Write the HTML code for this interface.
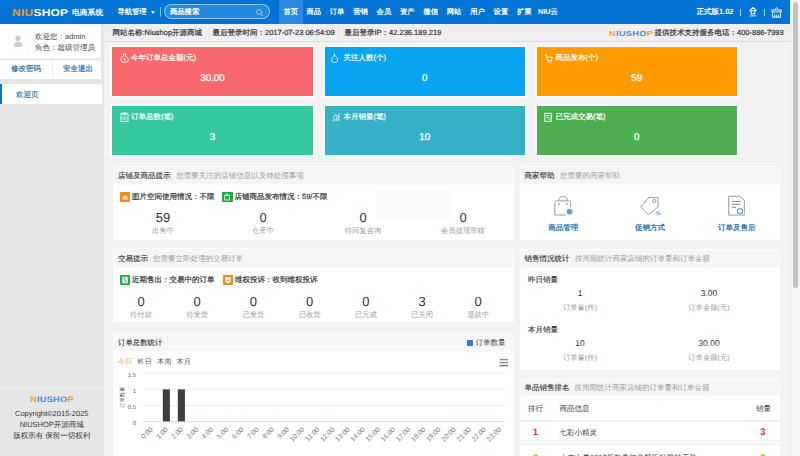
<!DOCTYPE html>
<html><head><meta charset="utf-8">
<style>
*{margin:0;padding:0;box-sizing:border-box;}
html,body{width:800px;height:456px;overflow:hidden;background:#f2f2f2;font-family:"Liberation Sans",sans-serif;color:#333;text-rendering:geometricPrecision;}
.a{position:absolute;white-space:nowrap;}
#hd{left:0;top:0;width:790px;height:24px;background:#0373d6;}
#sb{left:790px;top:0;width:10px;height:456px;background:#f6f6f6;border-left:1px solid #e9e9e9;}
#th{left:793px;top:2px;width:5px;height:286px;background:#c3c3c3;border-radius:3px;}
.nav{top:0;height:24px;line-height:24px;font-size:7.3px;color:#fff;font-weight:bold;text-align:center;}
#side{left:0;top:24px;width:103.5px;height:432px;background:#e6e6e6;}
#info{left:103.5px;top:24px;width:686.5px;height:18px;background:#efefef;border-bottom:1px solid #dedede;}
.it{font-size:7.5px;color:#333;top:28.5px;line-height:8px;-webkit-text-stroke:0.2px #333;}
.sep{top:25px;width:1.5px;height:16px;background:#fbfbfb;border-left:0.5px solid #e6e6e6;}
.card{height:49px;box-shadow:0 0 0 1.6px #fff;color:#fff;}
.ct{position:absolute;left:19px;top:6.5px;font-size:7.5px;line-height:8px;white-space:nowrap;font-weight:normal;-webkit-text-stroke:0.2px #fff;}
.ci{position:absolute;left:7.5px;top:6px;width:9px;height:10px;}
.cv{position:absolute;left:0;width:100%;top:25.5px;text-align:center;font-size:9.8px;line-height:12px;font-weight:normal;-webkit-text-stroke:0.3px #fff;}
.pn{background:#fff;}
.ph{position:absolute;left:0;top:0;width:100%;height:19.5px;background:#f5f5f5;border:1px solid #fbfbfb;}
.ph b{position:absolute;left:4.5px;top:5.5px;font-size:7.5px;line-height:8px;color:#333;font-weight:normal;-webkit-text-stroke:0.12px #333;}
.ph i{position:absolute;top:5.5px;font-style:normal;font-size:7.5px;line-height:8px;color:#9c9c9c;white-space:nowrap;}
.num{position:absolute;text-align:center;font-size:13px;line-height:13px;color:#333;}
.lb{position:absolute;text-align:center;font-size:7.3px;line-height:8px;color:#999;}
</style></head><body>
<!-- header -->
<div class="a" id="hd"></div>
<div class="a" id="sb"></div>
<div class="a" id="th"></div>

<div class="a" style="left:12px;top:10.2px;font-size:10px;line-height:7px;font-weight:bold;letter-spacing:0.2px;color:#fff;transform:scaleX(1.2);transform-origin:0 0;"><span style="color:#f39c34">NIU</span>SHOP</div>
<div class="a" style="left:72px;top:9px;font-size:7.8px;line-height:8px;color:#fff;font-weight:bold;">电商系统</div>
<div class="a nav" style="left:114px;width:36px;">导航管理</div>
<div class="a" style="left:150.5px;top:11px;width:0;height:0;border-left:2.5px solid transparent;border-right:2.5px solid transparent;border-top:3px solid #fff;"></div>
<div class="a" style="left:159.8px;top:7px;width:1px;height:9.5px;background:rgba(255,255,255,.55);"></div>
<div class="a" style="left:163.5px;top:4.3px;width:106px;height:15px;border-radius:8px;background:#2587e0;border:1.2px solid rgba(190,220,250,.75);"></div>
<div class="a" style="left:170px;top:8px;font-size:7.3px;line-height:8px;color:#fff;-webkit-text-stroke:0.3px #fff;">商品搜索</div>
<svg class="a" style="left:255px;top:8px" width="9" height="9" viewBox="0 0 9 9"><circle cx="4" cy="4" r="2.4" fill="none" stroke="#a9cff3" stroke-width="1"/><line x1="5.8" y1="5.8" x2="7.6" y2="7.6" stroke="#a9cff3" stroke-width="1.1"/></svg>
<div class="a" style="left:279px;top:0;width:23.7px;height:24px;background:#2a8ae3;"></div>
<div class="a nav" style="left:279px;width:23.7px;">首页</div>
<div class="a nav" style="left:302px;width:23.4px;">商品</div>
<div class="a nav" style="left:325.4px;width:23.4px;">订单</div>
<div class="a nav" style="left:348.8px;width:23.4px;">营销</div>
<div class="a nav" style="left:372.2px;width:23.4px;">会员</div>
<div class="a nav" style="left:395.6px;width:23.4px;">资产</div>
<div class="a nav" style="left:419px;width:23.4px;">微信</div>
<div class="a nav" style="left:442.4px;width:23.4px;">网站</div>
<div class="a nav" style="left:465.8px;width:23.4px;">用户</div>
<div class="a nav" style="left:489.2px;width:23.4px;">设置</div>
<div class="a nav" style="left:512.6px;width:23.4px;">扩展</div>
<div class="a nav" style="left:536px;width:24px;text-align:left;padding-left:2px;">NIU云</div>
<div class="a nav" style="left:694px;width:42px;font-size:7.5px;">正式版1.02</div>
<div class="a" style="left:740.3px;top:8.5px;width:0.8px;height:7.5px;background:rgba(255,255,255,.7);"></div>
<svg class="a" style="left:746px;top:5px" width="14" height="14" viewBox="0 0 14 14"><path d="M7 2.3 L10.3 5.6 H8.7 V9 H5.3 V5.6 H3.7 Z" fill="none" stroke="#fff" stroke-width="1.1" stroke-linejoin="round"/><circle cx="7" cy="5.6" r="0.8" fill="#fff"/><path d="M3.8 10.9 H10.2" stroke="#dfeefc" stroke-width="1"/></svg>
<div class="a" style="left:764.2px;top:8.5px;width:0.8px;height:7.5px;background:rgba(255,255,255,.7);"></div>
<svg class="a" style="left:770px;top:5px" width="13" height="14" viewBox="0 0 13 14"><path d="M4.6 5 L6.6 2.6 L8.6 5" fill="none" stroke="#fff" stroke-width="0.9"/><rect x="2" y="5" width="9.2" height="1.9" fill="none" stroke="#fff" stroke-width="0.9"/><path d="M2.6 7 V12.2 H10.6 V7 M4.6 9.6 V12.2 M6.6 9.6 V12.2 M8.6 9.6 V12.2" fill="none" stroke="#fff" stroke-width="0.9"/></svg>

<!-- sidebar -->
<div class="a" id="side"></div>
<div class="a" style="left:0;top:24px;width:101px;height:35px;background:#fff;border-bottom:1px solid #ececec;"></div>
<div class="a" style="left:8px;top:28.5px;width:20px;height:23.5px;background:#fff;border:1px solid #fafafa;"></div>
<svg class="a" style="left:13px;top:35px" width="10" height="12.5" viewBox="0 0 10 12.5"><circle cx="5" cy="3.4" r="2.6" fill="#cfcfcf"/><path d="M0.6 12 C0.6 8 2 6.8 5 6.8 C8 6.8 9.4 8 9.4 12 Z" fill="#cfcfcf"/></svg>
<div class="a" style="left:35px;top:33px;font-size:7.5px;line-height:8px;color:#444;">欢迎您：admin</div>
<div class="a" style="left:35px;top:44px;font-size:7.5px;line-height:8px;color:#444;">角色：超级管理员</div>
<div class="a" style="left:0;top:59.5px;width:101px;height:19.5px;background:#fff;border-top:1px solid #f0f0f0;"></div>
<div class="a" style="left:51.5px;top:60px;width:1px;height:19px;background:#ededed;"></div>
<div class="a" style="left:11px;top:64.5px;font-size:7.5px;line-height:8px;color:#2f6fa8;-webkit-text-stroke:0.2px #2f6fa8;">修改密码</div>
<div class="a" style="left:63px;top:64.5px;font-size:7.5px;line-height:8px;color:#2f6fa8;-webkit-text-stroke:0.2px #2f6fa8;">安全退出</div>
<div class="a" style="left:0;top:83.5px;width:102px;height:20.5px;background:#fff;"></div>
<div class="a" style="left:0;top:83.5px;width:2px;height:20.5px;background:#0373d6;"></div>
<div class="a" style="left:16px;top:90.5px;font-size:7.5px;line-height:8px;color:#2f6fa8;-webkit-text-stroke:0.15px #2f6fa8;">欢迎页</div>
<div class="a" style="left:0;top:387px;width:103.5px;height:1px;background:#f2f2f2;"></div>
<div class="a" id="lg2" style="left:30px;top:396.3px;font-size:8px;line-height:7px;font-weight:bold;letter-spacing:0.2px;transform:scaleX(1.16);transform-origin:0 0;color:#3d93dc;"><span style="color:#f39a30">N</span>IUSHO<span style="color:#f39a30">P</span></div>
<div class="a" style="left:0;width:103.5px;top:410px;text-align:center;font-size:7.5px;line-height:8px;color:#333;">Copyright©2015-2025</div>
<div class="a" style="left:0;width:103.5px;top:421px;text-align:center;font-size:7.5px;line-height:8px;color:#333;">NIUSHOP开源商城</div>
<div class="a" style="left:0;width:103.5px;top:432px;text-align:center;font-size:7.5px;line-height:8px;color:#333;">版权所有 保留一切权利</div>

<!-- info bar -->
<div class="a" id="info"></div>
<div class="a it" style="left:112.5px;">网站名称:Niushop开源商城</div>
<div class="a sep" style="left:206.4px;"></div>
<div class="a it" style="left:212.5px;">最后登录时间：2017-07-23 06:54:09</div>
<div class="a sep" style="left:339.3px;"></div>
<div class="a it" style="left:344.5px;">最后登录IP：42.236.189.219</div>
<div class="a sep" style="left:444.5px;"></div>
<div class="a" id="lg3" style="left:609px;top:29.8px;font-size:7.3px;line-height:7px;font-weight:bold;letter-spacing:0.3px;transform:scaleX(1.25);transform-origin:0 0;color:#3d93dc;"><span style="color:#f39a30">N</span>IUSHO<span style="color:#f39a30">P</span></div>
<div class="a it" style="left:654.5px;">提供技术支持服务电话：400-886-7993</div>


<!-- cards -->
<div class="a card" style="left:112px;top:47px;width:201px;background:#f9686c;">
 <svg class="ci" viewBox="0 0 9 10"><path d="M3 1.2 H6 L5.3 3 C7.5 4 8.3 5.5 8.3 6.8 C8.3 8.6 6.6 9.3 4.5 9.3 C2.4 9.3 0.7 8.6 0.7 6.8 C0.7 5.5 1.5 4 3.7 3 Z" fill="none" stroke="#fff" stroke-width="0.9"/><circle cx="4.5" cy="6.5" r="1" fill="#fff"/></svg>
 <div class="ct">今年订单总金额(元)</div><div class="cv">30.00</div></div>
<div class="a card" style="left:324.5px;top:47px;width:200.5px;background:#08a6f0;">
 <svg class="ci" viewBox="0 0 9 10" style="left:6.5px"><path d="M3.4 0.8 C3.6 2.5 4.2 3.2 5.2 4 C6.3 4.9 6.6 5.8 6.6 6.8 C6.6 8.6 5.2 9.6 3.6 9.6 C2 9.6 0.6 8.6 0.6 6.8 C0.6 5.6 1.3 4.6 2.3 4 C3 3.5 3.3 2.5 3.4 0.8 Z" fill="none" stroke="#fff" stroke-width="0.9" stroke-linejoin="round"/></svg>
 <div class="ct">关注人数(个)</div><div class="cv">0</div></div>
<div class="a card" style="left:536.5px;top:47px;width:200.5px;background:#ff9a00;">
 <svg class="ci" viewBox="0 0 9 10"><path d="M0.8 2 H2.2 L3.5 7.5 H7.5 L8.3 4 H2.8" fill="none" stroke="#fff" stroke-width="0.9"/><circle cx="4" cy="9" r="0.7" fill="#fff"/><circle cx="7" cy="9" r="0.7" fill="#fff"/></svg>
 <div class="ct">商品发布(个)</div><div class="cv">59</div></div>
<div class="a card" style="left:112px;top:106px;width:201px;background:#36c89e;">
 <svg class="ci" viewBox="0 0 9 10"><rect x="1" y="1.8" width="7" height="7.6" fill="none" stroke="#fff" stroke-width="0.9"/><rect x="3" y="0.8" width="3" height="1.8" fill="none" stroke="#fff" stroke-width="0.8"/><path d="M2.5 5 H6.5 M2.5 7 H6.5" stroke="#fff" stroke-width="0.8"/></svg>
 <div class="ct">订单总数(笔)</div><div class="cv">3</div></div>
<div class="a card" style="left:324.5px;top:106px;width:200.5px;background:#35b0c9;">
 <svg class="ci" viewBox="0 0 9 10"><path d="M0.8 9.3 V7.5 M2.8 9.3 V6 M4.8 9.3 V5 M6.8 9.3 V3.8 M0.8 5.5 L3.5 3 L5.5 4 L8.3 1.3" fill="none" stroke="#fff" stroke-width="0.9"/></svg>
 <div class="ct">本月销量(笔)</div><div class="cv">10</div></div>
<div class="a card" style="left:536.5px;top:106px;width:200.5px;background:#4daf52;">
 <svg class="ci" viewBox="0 0 9 10"><rect x="0.8" y="1.3" width="6.5" height="8" fill="none" stroke="#fff" stroke-width="0.9"/><path d="M2.3 3.5 H5.5 M2.3 5.5 H4.5 M4.5 8 L8.3 3.5" stroke="#fff" stroke-width="0.9"/></svg>
 <div class="ct">已完成交易(笔)</div><div class="cv">0</div></div>


<!-- panel 1 -->
<div class="a pn" style="left:112.5px;top:165.5px;width:401px;height:74.5px;"><div class="ph"><b>店铺及商品提示</b><i style="left:62.75px">您需要关注的店铺信息以及待处理事项</i></div></div>
<div class="a" style="left:120px;top:192px;width:10px;height:9.5px;background:#f28a1c;border-radius:1px;"></div>
<svg class="a" style="left:120px;top:192px" width="10" height="10" viewBox="0 0 10 10"><path d="M2.5 7.5 V4.5 L5 3 L7.5 4.5 V7.5 Z" fill="#fde3c3"/></svg>
<div class="a it" style="left:132px;top:192.5px;">图片空间使用情况：不限</div>
<div class="a" style="left:222px;top:192px;width:10.5px;height:9.5px;background:#1aae48;border-radius:1px;"></div>
<svg class="a" style="left:222px;top:192px" width="10" height="10" viewBox="0 0 10 10"><path d="M2.5 3.5 H7.5 V8 H2.5 Z M4 3.5 V2 H6 V3.5" fill="none" stroke="#d7f3df" stroke-width="0.9"/></svg>
<div class="a it" style="left:234.5px;top:192.5px;">店铺商品发布情况：59/不限</div>
<div class="a num" style="left:133px;width:60px;top:211.25px;">59</div><div class="a lb" style="left:133px;width:60px;top:227px;">出售中</div>
<div class="a num" style="left:233px;width:60px;top:211.25px;">0</div><div class="a lb" style="left:233px;width:60px;top:227px;">仓库中</div>
<div class="a num" style="left:333px;width:60px;top:211.25px;">0</div><div class="a lb" style="left:333px;width:60px;top:227px;">待回复咨询</div>
<div class="a num" style="left:433px;width:60px;top:211.25px;">0</div><div class="a lb" style="left:433px;width:60px;top:227px;">会员提现审核</div>

<div class="a" style="left:376px;top:191.4px;width:76px;height:28px;background:#fbfbfb;"></div>
<!-- panel 2 -->
<div class="a pn" style="left:112.5px;top:248px;width:401px;height:74px;"><div class="ph" style="height:20px"><b>交易提示</b><i style="left:39.5px">您需要立即处理的交易订单</i></div></div>
<div class="a" style="left:120px;top:275px;width:10px;height:9.5px;background:#1aae48;border-radius:1px;"></div>
<svg class="a" style="left:120px;top:275px" width="10" height="10" viewBox="0 0 10 10"><rect x="2.2" y="1.8" width="5.6" height="6.4" fill="#e9f8ee"/><path d="M3.3 3.3 H5.5 M3.3 4.8 H4.8 M5.2 5 V7 H6.8" fill="none" stroke="#1aae48" stroke-width="0.8"/></svg>
<div class="a it" style="left:132px;top:275.5px;">近期售出：交易中的订单</div>
<div class="a" style="left:223px;top:275px;width:10px;height:9.5px;background:#f28a1c;border-radius:1px;"></div>
<svg class="a" style="left:223px;top:275px" width="10" height="10" viewBox="0 0 10 10"><path d="M2.3 2.3 H7.7 V5.5 C7.7 7.2 6.2 8 5 8.3 C3.8 8 2.3 7.2 2.3 5.5 Z" fill="#fff"/><path d="M3.6 4.9 L4.7 6 L6.5 4.2" fill="none" stroke="#f28a1c" stroke-width="0.9"/></svg>
<div class="a it" style="left:235px;top:275.5px;">维权投诉：收到维权投诉</div>
<div class="a num" style="left:111.0px;width:60px;top:295.0px;">0</div><div class="a lb" style="left:111.0px;width:60px;top:311.4px;">待付款</div>
<div class="a num" style="left:167.2px;width:60px;top:295.0px;">0</div><div class="a lb" style="left:167.2px;width:60px;top:311.4px;">待发货</div>
<div class="a num" style="left:223.4px;width:60px;top:295.0px;">0</div><div class="a lb" style="left:223.4px;width:60px;top:311.4px;">已发货</div>
<div class="a num" style="left:279.6px;width:60px;top:295.0px;">0</div><div class="a lb" style="left:279.6px;width:60px;top:311.4px;">已收货</div>
<div class="a num" style="left:335.8px;width:60px;top:295.0px;">0</div><div class="a lb" style="left:335.8px;width:60px;top:311.4px;">已完成</div>
<div class="a num" style="left:392.0px;width:60px;top:295.0px;">3</div><div class="a lb" style="left:392.0px;width:60px;top:311.4px;">已关闭</div>
<div class="a num" style="left:448.20000000000005px;width:60px;top:295.0px;">0</div><div class="a lb" style="left:448.20000000000005px;width:60px;top:311.4px;">退款中</div>

<!-- panel 3 -->
<div class="a pn" style="left:112.5px;top:332.5px;width:401px;height:130px;"><div class="ph" style="height:19.5px;background:#f6f6f6"><b style="top:5px;font-size:7.4px;-webkit-text-stroke:0.1px #333">订单总数统计</b></div></div>
<div class="a" style="left:466.5px;top:340px;width:6px;height:6px;background:#2f7ed8;"></div>
<div class="a it" style="left:475.5px;top:338.5px;-webkit-text-stroke:0;color:#444;">订单数量</div>
<div class="a" style="left:118px;top:357.5px;font-size:7.2px;line-height:8px;color:#f0a050;">今日</div>
<div class="a" style="left:137.5px;top:357.5px;font-size:7.2px;line-height:8px;color:#555;">昨日</div>
<div class="a" style="left:157px;top:357.5px;font-size:7.2px;line-height:8px;color:#555;">本周</div>
<div class="a" style="left:176.5px;top:357.5px;font-size:7.2px;line-height:8px;color:#555;">本月</div>
<svg class="a" style="left:0;top:0" width="800" height="456" viewBox="0 0 800 456">
<g stroke="#ededed" stroke-width="1"><path d="M143.5 373.1 H505 M143.5 389.3 H505 M143.5 405.5 H505"/></g>
<path d="M143.5 421.6 H505" stroke="#dcdcdc" stroke-width="1"/>
<rect x="162.8" y="389.4" width="7.1" height="32" fill="#3c3c41"/>
<rect x="177.8" y="389.4" width="7.1" height="32" fill="#3c3c41"/>
<g font-family="Liberation Sans, sans-serif" font-size="6px" fill="#666" text-anchor="end"><text x="136" y="377">1.5</text><text x="136" y="392.8">1</text><text x="136" y="408.8">0.5</text><text x="136" y="424.8">0</text></g>
<text x="0" y="0" font-family="Liberation Sans, sans-serif" font-size="5.3px" fill="#555" text-anchor="middle" transform="translate(124.3 397.3) rotate(-90)">订单数量</text>
<g font-family="Liberation Sans, sans-serif" font-size="6.8px" fill="#777"><text x="153.12" y="430" text-anchor="end" transform="rotate(-45 153.12 430)">0:00</text><text x="168.28" y="430" text-anchor="end" transform="rotate(-45 168.28 430)">1:00</text><text x="183.43" y="430" text-anchor="end" transform="rotate(-45 183.43 430)">2:00</text><text x="198.58" y="430" text-anchor="end" transform="rotate(-45 198.58 430)">3:00</text><text x="213.73" y="430" text-anchor="end" transform="rotate(-45 213.73 430)">4:00</text><text x="228.88" y="430" text-anchor="end" transform="rotate(-45 228.88 430)">5:00</text><text x="244.03" y="430" text-anchor="end" transform="rotate(-45 244.03 430)">6:00</text><text x="259.18" y="430" text-anchor="end" transform="rotate(-45 259.18 430)">7:00</text><text x="274.32" y="430" text-anchor="end" transform="rotate(-45 274.32 430)">8:00</text><text x="289.48" y="430" text-anchor="end" transform="rotate(-45 289.48 430)">9:00</text><text x="304.63" y="430" text-anchor="end" transform="rotate(-45 304.63 430)">10:00</text><text x="319.78" y="430" text-anchor="end" transform="rotate(-45 319.78 430)">11:00</text><text x="334.93" y="430" text-anchor="end" transform="rotate(-45 334.93 430)">12:00</text><text x="350.07" y="430" text-anchor="end" transform="rotate(-45 350.07 430)">13:00</text><text x="365.23" y="430" text-anchor="end" transform="rotate(-45 365.23 430)">14:00</text><text x="380.38" y="430" text-anchor="end" transform="rotate(-45 380.38 430)">15:00</text><text x="395.53" y="430" text-anchor="end" transform="rotate(-45 395.53 430)">16:00</text><text x="410.68" y="430" text-anchor="end" transform="rotate(-45 410.68 430)">17:00</text><text x="425.83" y="430" text-anchor="end" transform="rotate(-45 425.83 430)">18:00</text><text x="440.98" y="430" text-anchor="end" transform="rotate(-45 440.98 430)">19:00</text><text x="456.12" y="430" text-anchor="end" transform="rotate(-45 456.12 430)">20:00</text><text x="471.28" y="430" text-anchor="end" transform="rotate(-45 471.28 430)">21:00</text><text x="486.43" y="430" text-anchor="end" transform="rotate(-45 486.43 430)">22:00</text><text x="501.58" y="430" text-anchor="end" transform="rotate(-45 501.58 430)">23:00</text></g>
<path d="M499.6 359.8 H508.2 M499.6 362.7 H508.2 M499.6 365.6 H508.2" stroke="#666" stroke-width="1.1"/>
</svg>

<!-- panel A -->
<div class="a pn" style="left:519.5px;top:165.5px;width:260px;height:74.5px;"><div class="ph"><b style="left:4px">商家帮助</b><i style="left:39.5px">您需要的商家帮助</i></div></div>
<div class="a" style="left:520px;top:223.5px;width:86.7px;text-align:center;font-size:7.5px;line-height:8px;color:#2f78b8;font-weight:bold;">商品管理</div>
<div class="a" style="left:606.7px;top:223.5px;width:86.7px;text-align:center;font-size:7.5px;line-height:8px;color:#2f78b8;font-weight:bold;">促销方式</div>
<div class="a" style="left:693.4px;top:223.5px;width:86.7px;text-align:center;font-size:7.5px;line-height:8px;color:#2f78b8;font-weight:bold;">订单及售后</div>
<svg class="a" style="left:0;top:0" width="800" height="456" viewBox="0 0 800 456">
<g fill="none" stroke="#9a9a9a" stroke-width="1">
<path d="M554.8 215 V202.5 Q554.8 200.8 556.5 200.8 H568.8 Q570.5 200.8 570.5 202.5 V207.5"/>
<path d="M554.8 215 H566"/>
<path d="M558.8 200.8 Q558.8 196.4 563.2 196.4 Q567.6 196.4 567.6 200.8"/>
<path d="M640.6 207 L648.6 197.6 H658.1 V207 L648.4 214.7 Z" stroke-linejoin="round"/>
<circle cx="654.3" cy="201" r="1.6"/>
<path d="M728.7 196.3 H740.2 L744.3 200.3 V215.1 H728.7 Z"/>
<path d="M731.8 201.4 H740.6 M731.8 204.3 H740.6 M731.8 207.3 H736" stroke="#8a8a8a"/>
</g>
<circle cx="558.9" cy="204" r="0.9" fill="#9a9a9a"/><circle cx="566.9" cy="204" r="0.9" fill="#9a9a9a"/>
<circle cx="569.6" cy="211.6" r="3.6" fill="#fff"/><circle cx="569.6" cy="211.6" r="2.9" fill="#5aa0d8"/>
<text x="658.2" y="214.8" font-family="Liberation Sans, sans-serif" font-size="5.5px" font-weight="bold" fill="#4a90d0" text-anchor="middle">%</text>
<circle cx="740" cy="211.2" r="3.8" fill="#fff"/><circle cx="740" cy="211.2" r="2.6" fill="none" stroke="#5aa0d8" stroke-width="1.2"/>
</svg>

<!-- panel B -->
<div class="a pn" style="left:519.5px;top:248.5px;width:260px;height:121.5px;"><div class="ph"><b style="left:4px">销售情况统计</b><i style="left:54.5px">按周期统计商家店铺的订单量和订单金额</i></div></div>
<div class="a" style="left:528px;top:276px;font-size:7.5px;line-height:8px;color:#333;-webkit-text-stroke:0.12px #333;">昨日销量</div>
<div class="a" style="left:540px;width:80px;top:289px;text-align:center;font-size:8.5px;line-height:9px;color:#333;">1</div>
<div class="a lb" style="left:540px;width:80px;top:304px;">订单量(件)</div>
<div class="a" style="left:669px;width:80px;top:289px;text-align:center;font-size:8.5px;line-height:9px;color:#333;">3.00</div>
<div class="a lb" style="left:669px;width:80px;top:304px;">订单金额(元)</div>
<div class="a" style="left:528px;top:326px;font-size:7.5px;line-height:8px;color:#333;-webkit-text-stroke:0.12px #333;">本月销量</div>
<div class="a" style="left:540px;width:80px;top:338.5px;text-align:center;font-size:8.5px;line-height:9px;color:#333;">10</div>
<div class="a lb" style="left:540px;width:80px;top:354px;">订单量(件)</div>
<div class="a" style="left:669px;width:80px;top:338.5px;text-align:center;font-size:8.5px;line-height:9px;color:#333;">30.00</div>
<div class="a lb" style="left:669px;width:80px;top:354px;">订单金额(元)</div>

<!-- panel C -->
<div class="a pn" style="left:519.5px;top:378.5px;width:260px;height:90px;"><div class="ph" style="height:17px"><b style="top:4.5px;left:4px">单品销售排名</b><i style="left:54px;top:4.5px">按周期统计商家店铺的订单量和订单金额</i></div></div>
<div class="a" style="left:528px;top:404.5px;font-size:7.5px;line-height:8px;color:#333;">排行</div>
<div class="a" style="left:559.5px;top:404.5px;font-size:7.5px;line-height:8px;color:#333;">商品信息</div>
<div class="a" style="left:756px;top:404.5px;font-size:7.5px;line-height:8px;color:#333;">销量</div>
<div class="a" style="left:519.5px;top:420.3px;width:260px;height:2px;background:#f1f1f1;"></div>
<div class="a" style="left:529.5px;width:12px;top:428.2px;text-align:center;font-size:9.5px;line-height:9px;color:#d9383a;font-weight:bold;">1</div>
<div class="a" style="left:559.5px;top:429px;font-size:7.5px;line-height:8px;color:#333;">七彩小精灵</div>
<div class="a" style="left:757px;width:12px;top:428.2px;text-align:center;font-size:9.5px;line-height:9px;color:#d9383a;font-weight:bold;">3</div>
<div class="a" style="left:519.5px;top:440.3px;width:260px;height:1px;background:#ededed;"></div><div class="a" style="left:519.5px;top:442px;width:260px;height:3.5px;background:#f5f5f5;"></div>
<div class="a" style="left:530px;width:12px;top:453.5px;text-align:center;font-size:9.5px;line-height:9px;color:#f0a000;font-weight:bold;">2</div>
<div class="a" style="left:560px;top:453.5px;font-size:7.5px;line-height:8px;color:#333;">上衣女夏2017新款春红色韩版打篮袖正装</div>
<div class="a" style="left:757px;width:12px;top:453.5px;text-align:center;font-size:9.5px;line-height:9px;color:#f0a000;font-weight:bold;">2</div>

</body></html>
